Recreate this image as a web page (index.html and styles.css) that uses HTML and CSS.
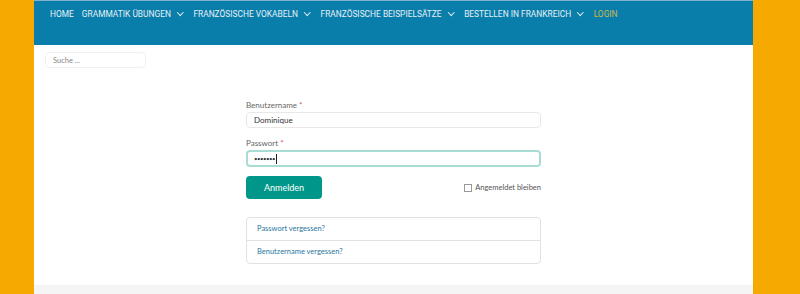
FILE: index.html
```html
<!DOCTYPE html>
<html lang="de">
<head>
    <meta charset="UTF-8">
    <meta name="viewport" content="width=device-width, initial-scale=1.0">
    <title>Anmelden</title>
    <link rel="stylesheet" href="styles.css">
</head>
<body>
    <div class="page">
        <!-- Header with main navigation -->
        <header class="site-header">
            <nav class="main-nav">
                <a href="#" class="nav-item">Home</a>
                <a href="#" class="nav-item">Grammatik Übungen <span class="chev"></span></a>
                <a href="#" class="nav-item">Französische Vokabeln <span class="chev"></span></a>
                <a href="#" class="nav-item">Französische Beispielsätze <span class="chev"></span></a>
                <a href="#" class="nav-item">Bestellen in Frankreich <span class="chev"></span></a>
                <a href="#" class="nav-item login">Login</a>
            </nav>
        </header>

        <main class="content">
            <div class="search-box">
                <input type="text" placeholder="Suche ..." class="search-input">
            </div>

            <!-- Login form -->
            <form class="login-form">
                <label class="field-label" for="username">Benutzername <span class="req">*</span></label>
                <input type="text" id="username" class="field-input" value="Dominique">

                <label class="field-label" for="password">Passwort <span class="req">*</span></label>
                <div class="field-input focused">•••••••<span class="caret"></span></div>

                <div class="form-actions">
                    <button type="button" class="btn-login">Anmelden</button>
                    <label class="remember"><span class="checkbox"></span>Angemeldet bleiben</label>
                </div>

                <ul class="help-links">
                    <li><a href="#">Passwort vergessen?</a></li>
                    <li><a href="#">Benutzername vergessen?</a></li>
                </ul>
            </form>
        </main>

        <footer class="site-footer"></footer>
    </div>
</body>
</html>
```

FILE: styles.css
```css
body {
    margin: 0;
    padding: 0;
    background-color: #f6a900;
    font-family: Lato, "Open Sans", sans-serif;
    height: 294px;
    overflow: hidden;
}

.page {
    width: 719px;
    margin-left: 34px;
    background: white;
    height: 294px;
    display: flex;
    flex-direction: column;
}

/* Header */
.site-header {
    background-color: #0a7eab;
    border-top: 1px solid #7fb3cc;
    height: 44px;
}

.main-nav {
    display: flex;
    align-items: center;
    padding: 7px 0 0 16px;
    gap: 11px;
}

.nav-item {
    font-family: Roboto, "Liberation Sans", sans-serif;
    font-size: 8.4px;
    text-transform: uppercase;
    color: #e6f0f5;
    text-decoration: none;
    display: flex;
    align-items: center;
    line-height: 12px;
}

.nav-item:first-child {
    margin-right: -3px;
}

.nav-item.login {
    color: #c9b84a;
}

.chev {
    display: inline-block;
    width: 3.5px;
    height: 3.5px;
    border-right: 1.2px solid #e6f0f5;
    border-bottom: 1.2px solid #e6f0f5;
    transform: rotate(45deg);
    margin: -3px 0 0 7px;
}

/* Content */
.content {
    flex-grow: 1;
    padding: 7px 11px 0;
}

.search-box {
    height: 16px;
}

.search-input {
    display: block;
    box-sizing: border-box;
    width: 101px;
    height: 16px;
    border: 1px solid #f0f0f0;
    border-radius: 4px;
    padding: 0 7px;
    font-family: Lato, sans-serif;
    font-size: 7.5px;
    outline: none;
}

.search-input::placeholder {
    color: #888;
}

.login-form {
    width: 295px;
    margin: 32px 0 0 201px;
}

.field-label {
    display: block;
    font-size: 8px;
    color: #666;
    margin-bottom: 2px;
    line-height: 10px;
}

.req {
    color: #d9534f;
}

.field-input {
    display: block;
    box-sizing: border-box;
    width: 295px;
    height: 16px;
    border: 1px solid #e8e8e8;
    border-radius: 4px;
    padding: 0 7px;
    font-family: Lato, sans-serif;
    font-size: 8px;
    color: #333;
    outline: none;
    margin-bottom: 10px;
    line-height: 14px;
}

.field-input.focused {
    border: 2px solid #a9dcd5;
    height: 17px;
    padding: 0 6px;
    font-size: 6px;
    letter-spacing: -0.5px;
    line-height: 13px;
    margin-bottom: 9px;
}

.caret {
    display: inline-block;
    width: 1px;
    height: 10px;
    background: #222;
    vertical-align: middle;
    margin-left: 1px;
}

.form-actions {
    display: flex;
    justify-content: space-between;
    align-items: center;
}

.btn-login {
    width: 76px;
    height: 23px;
    background-color: #00978a;
    color: white;
    border: none;
    border-radius: 4px;
    font-family: Lato, sans-serif;
    font-size: 9px;
    cursor: pointer;
}

.remember {
    display: flex;
    align-items: center;
    font-size: 7.5px;
    color: #555;
}

.checkbox {
    display: inline-block;
    width: 6px;
    height: 6px;
    border: 1px solid #999;
    margin-right: 3px;
}

.help-links {
    list-style: none;
    margin: 18px 0 0;
    padding: 0;
    border: 1px solid #e2e2e6;
    border-radius: 4px;
}

.help-links li {
    height: 22px;
    line-height: 22px;
    padding: 0 10px;
    font-size: 7.5px;
}

.help-links li + li {
    border-top: 1px solid #e2e2e6;
}

.help-links a {
    color: #2a76a0;
    text-decoration: none;
}

.site-footer {
    height: 9px;
    background-color: #f5f5f5;
}
```
